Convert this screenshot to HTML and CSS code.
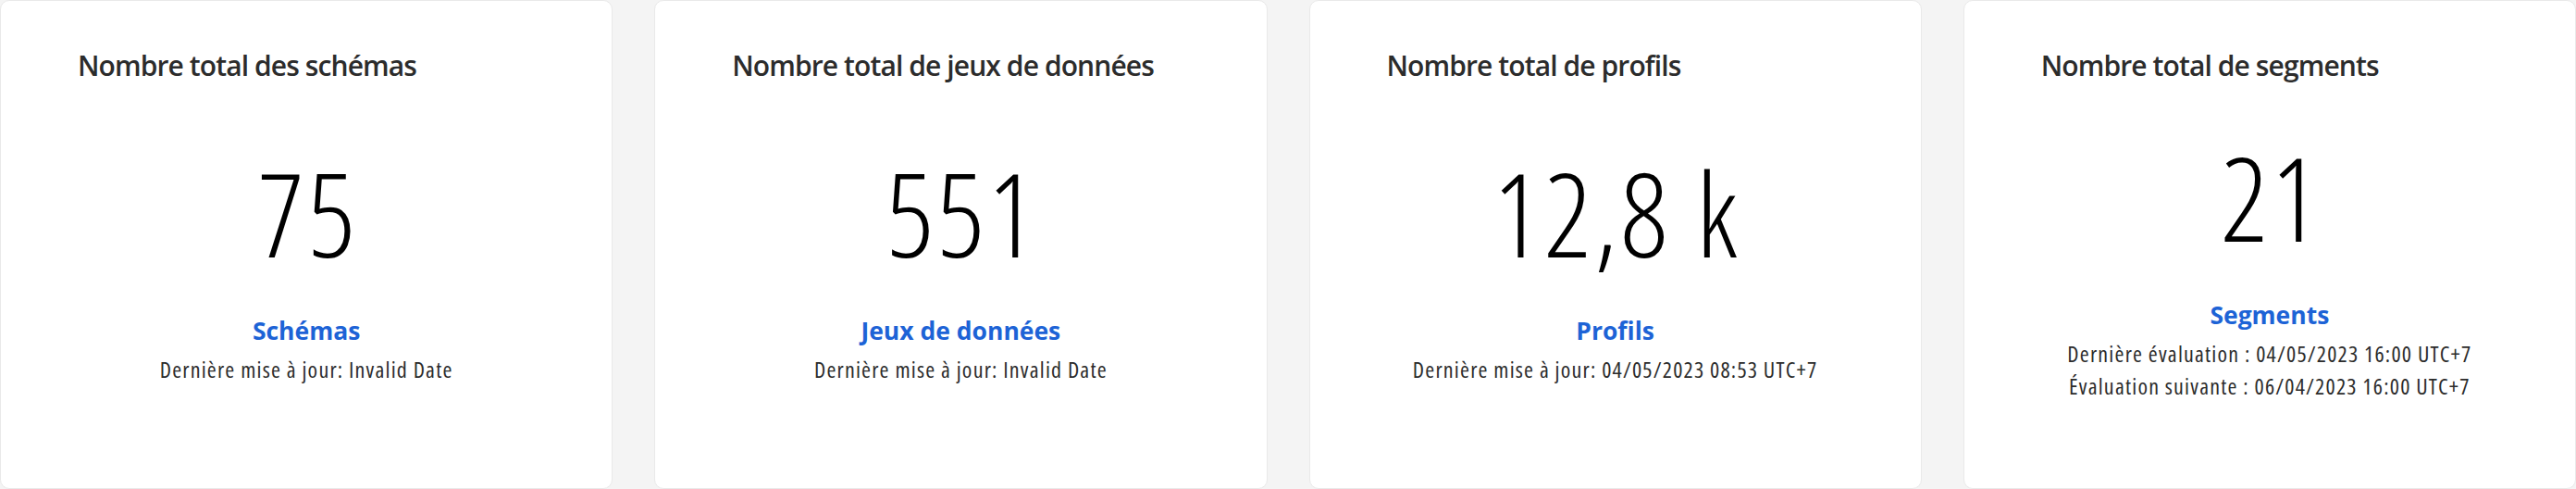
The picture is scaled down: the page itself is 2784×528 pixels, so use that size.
FILE: index.html
```html
<!DOCTYPE html>
<html lang="fr">
<head>
<meta charset="utf-8">
<title>Totaux</title>
<link rel="stylesheet" href="styles.css">
</head>
<body>
<main class="cards">
  <section class="card">
    <h2 class="card-title">Nombre total des schémas</h2>
    <div class="card-body">
      <div class="metric">75</div>
      <a class="metric-link" href="#">Schémas</a>
      <p class="meta">Dernière mise à jour: Invalid Date</p>
    </div>
  </section>
  <section class="card">
    <h2 class="card-title">Nombre total de jeux de données</h2>
    <div class="card-body">
      <div class="metric">551</div>
      <a class="metric-link" href="#">Jeux de données</a>
      <p class="meta">Dernière mise à jour: Invalid Date</p>
    </div>
  </section>
  <section class="card">
    <h2 class="card-title">Nombre total de profils</h2>
    <div class="card-body">
      <div class="metric">12,8 k</div>
      <a class="metric-link" href="#">Profils</a>
      <p class="meta">Dernière mise à jour: 04/05/2023 08:53 UTC+7</p>
    </div>
  </section>
  <section class="card">
    <h2 class="card-title">Nombre total de segments</h2>
    <div class="card-body">
      <div class="metric">21</div>
      <a class="metric-link" href="#">Segments</a>
      <p class="meta">Dernière évaluation : 04/05/2023 16:00 UTC+7</p>
      <p class="meta">Évaluation suivante : 06/04/2023 16:00 UTC+7</p>
    </div>
  </section>
</main>
</body>
</html>
```
FILE: styles.css
```css
* { box-sizing: border-box; }
html, body {
  margin: 0;
  padding: 0;
  background: #f4f4f4;
}
body {
  font-family: "Open Sans", "Liberation Sans", sans-serif;
  color: #2c2c2c;
}
.cards {
  display: grid;
  grid-template-columns: repeat(4, 1fr);
  column-gap: 45px;
  height: 528px;
}
.card {
  background: #fff;
  border: 1px solid #e9e9e9;
  border-radius: 10px;
  padding: 50px 83px 0;
  display: flex;
  flex-direction: column;
  min-width: 0;
}
.card-title {
  margin: 0;
  font-size: 30px;
  line-height: 40px;
  font-weight: 600;
  font-stretch: 100%;
  letter-spacing: -0.9px;
  color: #2c2c2c;
  white-space: nowrap;
}
.card-body {
  flex: 1;
  display: flex;
  flex-direction: column;
  align-items: center;
  justify-content: center;
  padding-bottom: 36px;
}
.metric {
  font-size: 126px;
  line-height: 126px;
  font-weight: 300;
  font-stretch: 75%;
  letter-spacing: 3.5px;
  text-indent: 3.5px;
  color: #000;
  white-space: nowrap;
}
.metric-link {
  margin-top: 49px;
  font-size: 26.5px;
  line-height: 33px;
  font-weight: 700;
  font-stretch: 100%;
  color: #1d63d6;
  text-decoration: none;
}
.meta {
  margin: 7px 0 0;
  font-size: 24px;
  line-height: 35px;
  font-stretch: 75%;
  letter-spacing: 1.2px;
  color: #2c2c2c;
  white-space: nowrap;
}
.meta + .meta { margin-top: 0; }
```
